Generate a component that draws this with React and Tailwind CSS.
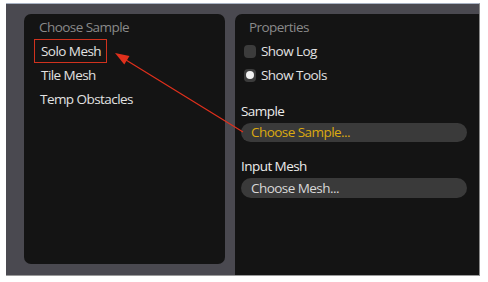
import React from "react";

export default function App() {
  const font = { fontFamily: '"Open Sans", "Noto Sans", sans-serif' };
  return (
    <div className="relative w-[488px] h-[282px] bg-white overflow-hidden" style={font}>
      <div className="ml-[6px] mt-[3px] w-[474px] h-[273px] bg-[#4a4950] border-t border-t-[#a9b3c4] border-b border-b-[#9a9a9a] border-r border-r-[#8a8a8a] flex gap-[10px] pl-[18px] pt-[10px]">
        <div className="w-[201px] h-[250px] bg-[#141414] rounded-[7px] flex flex-col pt-[1px] text-[13.5px] tracking-[-0.55px] font-medium text-[#e2e2e2]">
          <div className="h-6 flex items-center pl-[15px] text-[#8a8a8a]">Choose Sample</div>
          <div className="h-6 flex items-center ml-[10px] w-[73px] border border-[#d0321e] pl-[6px]">Solo Mesh</div>
          <div className="h-6 flex items-center pl-[17px]">Tile Mesh</div>
          <div className="h-6 flex items-center pl-[16px]">Temp Obstacles</div>
        </div>
        <div className="flex-1 bg-[#141414] rounded-tl-[7px] flex flex-col pt-[1px] text-[13.5px] tracking-[-0.55px] font-medium text-[#e2e2e2]">
          <div className="h-6 flex items-center pl-[14px] text-[#8a8a8a]">Properties</div>
          <div className="h-6 flex items-center pl-[9px] gap-[5px]">
            <div className="w-[12px] h-[13px] rounded-[4px] bg-[#3c3c3c]"></div>
            <span>Show Log</span>
          </div>
          <div className="h-6 flex items-center pl-[9px] gap-[5px]">
            <div className="w-[12px] h-[13px] rounded-[4px] bg-[#3c3c3c] flex items-center justify-center">
              <div className="w-[8px] h-[8px] rounded-full bg-[#f2f2f2]"></div>
            </div>
            <span>Show Tools</span>
          </div>
          <div className="h-[24px] mt-[12px] flex items-center pl-[6px] text-[#ececec]">Sample</div>
          <div className="ml-[6px] mr-[12px] h-[19px] rounded-full bg-[#3a3a3a] flex items-center pl-[10px] text-[#dcaa10]">Choose Sample...</div>
          <div className="h-[23px] mt-[13px] flex items-center pl-[6px] text-[#ececec]">Input Mesh</div>
          <div className="ml-[6px] mr-[12px] h-[20px] rounded-full bg-[#3a3a3a] flex items-center pl-[10px] text-[#d8d8d8]">Choose Mesh...</div>
        </div>
      </div>
      <svg className="absolute left-0 top-0" width="488" height="282" viewBox="0 0 488 282">
        <line x1="243" y1="132" x2="126" y2="60" stroke="#e0301c" strokeWidth="1.3" />
        <polygon points="115,53 124.3,64.6 129.5,56" fill="#e0301c" />
      </svg>
    </div>
  );
}
